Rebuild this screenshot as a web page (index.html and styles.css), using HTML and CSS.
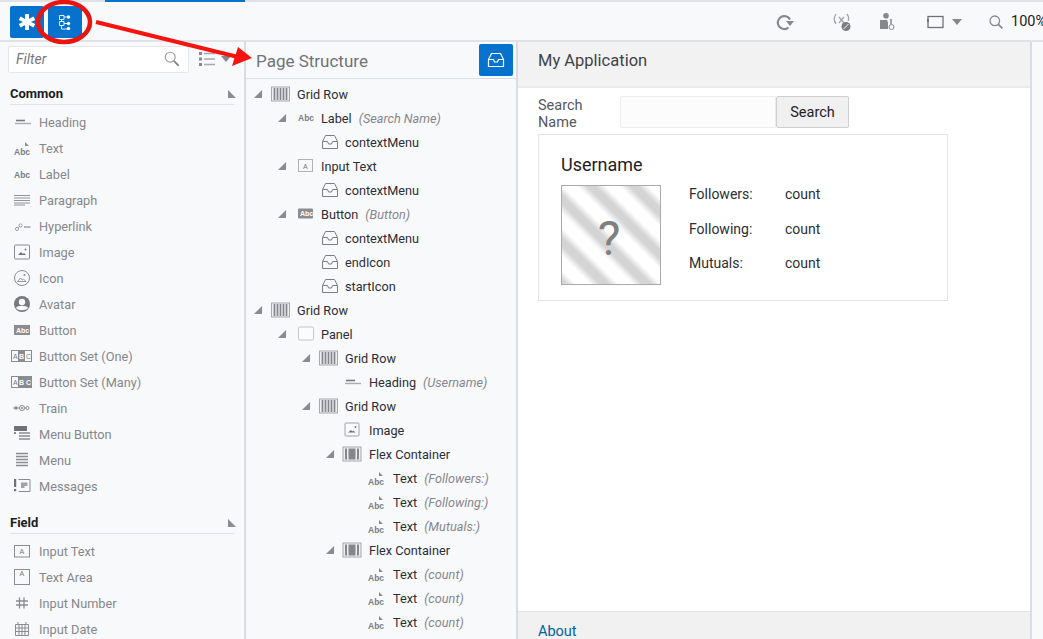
FILE: index.html
```html
<!DOCTYPE html>
<html lang="en">
<head>
<meta charset="utf-8">
<title>Page Designer</title>
<link rel="stylesheet" href="styles.css">
</head>
<body>
<svg class="defs" aria-hidden="true">
  <symbol id="i-heading" viewBox="0 0 22 16"><path d="M5 6.500h9" stroke="#77797e" stroke-width="1.600"/><path d="M4 9.500h16" stroke="#aaacb0" stroke-width="1.400"/></symbol>
  <symbol id="i-para" viewBox="0 0 22 16"><path d="M3 3.500h16M3 6h16M3 8.500h16M3 11h16M3 13h11" stroke="#77797e" stroke-width=".8"/></symbol>
  <symbol id="i-link" viewBox="0 0 22 16"><circle cx="6" cy="11" r="1.600" fill="none" stroke="#a0a2a6"/><circle cx="9.500" cy="7.500" r="1.600" fill="none" stroke="#a0a2a6"/><path d="M7 10l2-2" stroke="#a0a2a6"/><path d="M13 9h6.500" stroke="#8a8c91" stroke-width="1.200"/></symbol>
  <symbol id="i-image" viewBox="0 0 22 16"><rect x="3.500" y="1" width="15" height="14" rx="1" fill="none" stroke="#8a8c91"/><path d="M7 11l3-3 2 2 1-1 2 2z" fill="#6f7176"/><circle cx="14.500" cy="5.500" r=".9" fill="#6f7176"/></symbol>
  <symbol id="i-icon" viewBox="0 0 22 16"><circle cx="11" cy="8" r="7.500" fill="none" stroke="#8a8c91"/><path d="M6.500 11.500l3-3.500 1.800 2 1.200-1 2.500 2.500z" fill="none" stroke="#8a8c91" stroke-width=".9"/><circle cx="13.500" cy="5" r="1" fill="#8a8c91"/></symbol>
  <symbol id="i-avatar" viewBox="0 0 22 16"><circle cx="11" cy="8" r="8" fill="#77797e"/><circle cx="11" cy="6" r="3.200" fill="#f8f9fb"/><path d="M5 12c1-3 11-3 12 0-2 3-10 3-12 0z" fill="#f8f9fb"/></symbol>
  <symbol id="i-train" viewBox="0 0 22 16"><circle cx="5" cy="8" r="1.800" fill="#8a8c91"/><circle cx="11" cy="8" r="2.500" fill="none" stroke="#8a8c91"/><circle cx="11" cy="8" r="1" fill="#8a8c91"/><circle cx="16.500" cy="8" r="1.500" fill="none" stroke="#8a8c91"/><path d="M2 8h1M7 8h1.500M13.500 8h1.500" stroke="#8a8c91"/></symbol>
  <symbol id="i-menubtn" viewBox="0 0 22 16"><rect x="3" y="0" width="13" height="5" fill="#6f7176"/><path d="M3 6h2v2H3z" fill="#8a8c91"/><path d="M8 7h11M8 10h11M8 13h11" stroke="#8a8c91" stroke-width="1.500"/></symbol>
  <symbol id="i-menu" viewBox="0 0 22 16"><path d="M5 1.500h12M5 4.500h12M5 7.500h12M5 10.500h12M5 13.500h12" stroke="#8a8c91" stroke-width="1.500"/></symbol>
  <symbol id="i-msg" viewBox="0 0 22 16"><rect x="3" y="1" width="2.200" height="8" fill="#6f7176"/><rect x="3" y="11" width="2.200" height="2.200" fill="#6f7176"/><path d="M7.500 1.500h11.500v12H7.500" fill="none" stroke="#8a8c91"/><path d="M10 4.500h6.500v3.500h-3v2H10z" fill="#a0a2a6"/></symbol>
  <symbol id="i-num" viewBox="0 0 22 16"><path d="M8.500 2.500v11M13 2.500v11M5 6h12M5 10h12" stroke="#8a8c91" stroke-width="1.300"/></symbol>
  <symbol id="i-date" viewBox="0 0 22 16"><path d="M4.500 3.500h13v11h-13zM4.500 7h13M4.500 10.500h13M8 3.500v11M11 3.500v11M14 3.500v11M7 1v3M15 1v3" fill="none" stroke="#8a8c91"/></symbol>
  <symbol id="i-grid" viewBox="0 0 22 16"><rect x="2.500" y="1" width="18" height="14" fill="#eceef1" stroke="#a6a8ac"/><path d="M5.500 2v12M8.500 2v12M11.500 2v12M14.500 2v12M17.500 2v12" stroke="#85878c" stroke-width="1.700"/></symbol>
  <symbol id="i-flex" viewBox="0 0 22 16"><rect x="2" y="1" width="18" height="14" fill="#eceef1" stroke="#a6a8ac"/><rect x="4" y="2.500" width="2" height="11" fill="#85878c"/><rect x="7.500" y="2.500" width="7" height="11" fill="#85878c"/><rect x="16" y="2.500" width="2" height="11" fill="#85878c"/></symbol>
  <symbol id="i-panel" viewBox="0 0 22 16"><rect x="5.500" y="1" width="15" height="13" rx="1.500" fill="#fcfcfd" stroke="#c4c6ca"/></symbol>
  <symbol id="i-inbox" viewBox="0 0 22 16"><path d="M5.500 7.500L8.500 1.500h9l3 6v7h-15zM5.500 7.500h5l1 2.500h3l1-2.500h5" fill="none" stroke="#7b7d82" stroke-width="1"/></symbol>
  <symbol id="i-image2" viewBox="0 0 22 16"><rect x="4" y="1" width="14" height="13" rx="1" fill="none" stroke="#a0a2a6"/><path d="M7 10.500l3-2.500 1.500 1.500 1-1 2 2z" fill="#6f7176"/><circle cx="14.500" cy="5" r=".9" fill="#6f7176"/></symbol>
</svg>

<div class="app">
  <div class="topline"><span class="topline-blue"></span></div>
  <header class="toolbar">
    <button class="tb-btn" type="button" aria-label="Components">
      <svg class="tb-ic" viewBox="0 0 20 20"><path d="M8 2h4v5l4.300-2.500 2 3.400L14 10l4.300 2.100-2 3.400L12 13v5H8v-5l-4.300 2.500-2-3.400L6 10 1.700 7.900l2-3.400L8 7z" fill="#fff"/></svg>
    </button>
    <button class="tb-btn" type="button" aria-label="Page structure">
      <svg class="tb-ic" viewBox="0 0 20 20"><path d="M4.500 3.500h4.500v4H4.500zM4.500 9.500h4.500v4H4.500zM9 5h3M9 11.500h3M6.500 7.500v2M6.500 13.500v3.500h5.500" fill="none" stroke="#fff" stroke-width=".9"/><circle cx="13.500" cy="5" r="1.700" fill="#fff"/><circle cx="13.500" cy="11.500" r="1.700" fill="#fff"/><circle cx="13.500" cy="16.500" r="1.700" fill="#fff"/></svg>
    </button>
    <div class="tb-right">
      <svg class="tb-tool reload" viewBox="0 0 20 20"><path d="M13.500 15.500A6.500 6.500 0 1 1 15 7.500" fill="none" stroke="#85878c" stroke-width="2.200"/><path d="M11 9h8l-4 5z" fill="#85878c"/></svg>
      <span class="tb-div"></span>
      <svg class="tb-tool vars" viewBox="0 0 20 20"><path d="M4 2q-3.500 5 0 10M15 2q2.500 3.500 1.200 7M7 5l5 6M12 5l-5 6" fill="none" stroke="#a0a2a6" stroke-width="1.300"/><circle cx="14" cy="14.500" r="4.500" fill="#7b7d82"/><path d="M11.500 17l5-5" stroke="#f8f9fb"/></svg>
      <svg class="tb-tool person" viewBox="0 0 20 20"><circle cx="9" cy="3.800" r="2.800" fill="#85878c"/><path d="M3 8h7l1 2.500V17H3z" fill="#85878c"/><circle cx="14.500" cy="15" r="2.500" fill="none" stroke="#85878c"/><path d="M14 7v5" stroke="#85878c" stroke-width="1.500"/></svg>
      <svg class="tb-tool frame" viewBox="0 0 20 16"><rect x="2" y="2.500" width="15" height="11" fill="none" stroke="#6f7176" stroke-width="1.300"/><path d="M2 5v3" stroke="#6f7176" stroke-width="2"/></svg>
      <span class="tb-caret"></span>
      <svg class="tb-tool zoom" viewBox="0 0 20 20"><circle cx="8.500" cy="8.500" r="6" fill="none" stroke="#85878c" stroke-width="1.600"/><path d="M13 13l5 5" stroke="#85878c" stroke-width="2.200"/></svg>
      <span class="tb-zoom">100%</span>
    </div>
  </header>

  <div class="columns">
    <aside class="palette">
      <div class="filter-row">
        <div class="filter">
          <span class="filter-text">Filter</span>
          <svg class="filter-ic" viewBox="0 0 20 20"><circle cx="8" cy="8" r="5.500" fill="none" stroke="#9a9ca0" stroke-width="1.300"/><path d="M12 12l5.500 5.500" stroke="#85878c" stroke-width="2"/></svg>
        </div>
        <svg class="list-ic" viewBox="0 0 18 16"><path d="M1 1h3v3H1zM1 6.500h3v3H1zM1 12h3v3H1z" fill="#85878c"/><path d="M6 2.500h11M6 8h11M6 13.500h11" stroke="#a6a8ac" stroke-width="1.400"/></svg>
        <span class="caret-down"></span>
      </div>
      <div class="sec-head"><span>Common</span><span class="corner"></span></div>
      <ul class="pal-list">
        <li class="pal-item"><svg class="ic"><use href="#i-heading"/></svg>Heading</li>
        <li class="pal-item"><svg class="ic" viewBox="0 0 22 16"><path d="M14 2l4 4h-4z" fill="#8a8c91"/><text x="3" y="15" class="abc">Abc</text></svg>Text</li>
        <li class="pal-item"><svg class="ic" viewBox="0 0 22 16"><text x="3" y="11.500" class="abc">Abc</text></svg>Label</li>
        <li class="pal-item"><svg class="ic"><use href="#i-para"/></svg>Paragraph</li>
        <li class="pal-item"><svg class="ic"><use href="#i-link"/></svg>Hyperlink</li>
        <li class="pal-item"><svg class="ic"><use href="#i-image"/></svg>Image</li>
        <li class="pal-item"><svg class="ic"><use href="#i-icon"/></svg>Icon</li>
        <li class="pal-item"><svg class="ic"><use href="#i-avatar"/></svg>Avatar</li>
        <li class="pal-item"><svg class="ic" viewBox="0 0 22 16"><rect x="3" y="3" width="16" height="10" fill="#8a8c91"/><text x="5" y="10.500" class="abc-w">Abc</text></svg>Button</li>
        <li class="pal-item"><svg class="ic" viewBox="0 0 22 16"><rect x=".5" y="2.500" width="20" height="11" fill="#f8f9fb" stroke="#8a8c91"/><rect x="7" y="3" width="7" height="10" fill="#8a8c91"/><text x="2" y="11" class="abc-s">A</text><text x="8" y="11" class="abc-w">B</text><text x="15" y="11" class="abc-s">C</text></svg>Button Set (One)</li>
        <li class="pal-item"><svg class="ic" viewBox="0 0 22 16"><rect x=".5" y="2.500" width="20" height="11" fill="#8a8c91" stroke="#8a8c91"/><rect x="1" y="3" width="6" height="10" fill="#f8f9fb"/><text x="2" y="11" class="abc-s">A</text><text x="8" y="11" class="abc-w">B</text><text x="15" y="11" class="abc-w">C</text></svg>Button Set (Many)</li>
        <li class="pal-item"><svg class="ic"><use href="#i-train"/></svg>Train</li>
        <li class="pal-item"><svg class="ic"><use href="#i-menubtn"/></svg>Menu Button</li>
        <li class="pal-item"><svg class="ic"><use href="#i-menu"/></svg>Menu</li>
        <li class="pal-item"><svg class="ic"><use href="#i-msg"/></svg>Messages</li>
      </ul>
      <div class="sec-head sec-field"><span>Field</span><span class="corner"></span></div>
      <ul class="pal-list">
        <li class="pal-item"><svg class="ic" viewBox="0 0 22 16"><rect x="3.500" y="2.500" width="15" height="11.500" fill="none" stroke="#8a8c91"/><text x="8.500" y="11" class="abc-s">A</text></svg>Input Text</li>
        <li class="pal-item"><svg class="ic" viewBox="0 0 22 16"><rect x="3.500" y=".5" width="15" height="15" fill="none" stroke="#8a8c91"/><text x="8.500" y="7" class="abc-s">A</text></svg>Text Area</li>
        <li class="pal-item"><svg class="ic"><use href="#i-num"/></svg>Input Number</li>
        <li class="pal-item"><svg class="ic"><use href="#i-date"/></svg>Input Date</li>
      </ul>
    </aside>

    <section class="structure">
      <div class="struct-head">
        <h2 class="struct-title">Page Structure</h2>
        <button class="inbox-btn" type="button" aria-label="Slots">
          <svg class="inbox-ic" viewBox="0 0 20 16"><path d="M2.500 7.500L5.500 1.500h9l3 6v7h-15zM2.500 7.500h5l1 2.500h3l1-2.500h5" fill="none" stroke="#fff" stroke-width="1.200"/></svg>
        </button>
      </div>
      <ul class="tree">
        <li class="row l0"><i class="tri"></i><svg class="ic"><use href="#i-grid"/></svg>Grid Row</li>
        <li class="row l1"><i class="tri"></i><svg class="ic" viewBox="0 0 22 16"><text x="5" y="11" class="abc">Abc</text></svg>Label<em>(Search Name)</em></li>
        <li class="row l2"><i class="tri none"></i><svg class="ic"><use href="#i-inbox"/></svg>contextMenu</li>
        <li class="row l1"><i class="tri"></i><svg class="ic" viewBox="0 0 22 16"><rect x="5.500" y="1.500" width="14" height="12" fill="#f8f9fb" stroke="#b0b2b6"/><text x="10" y="10.500" class="abc-s">A</text></svg>Input Text</li>
        <li class="row l2"><i class="tri none"></i><svg class="ic"><use href="#i-inbox"/></svg>contextMenu</li>
        <li class="row l1"><i class="tri"></i><svg class="ic" viewBox="0 0 22 16"><rect x="5" y="2.500" width="15" height="10" rx="1" fill="#8a8c91"/><text x="7" y="10" class="abc-w">Abc</text></svg>Button<em>(Button)</em></li>
        <li class="row l2"><i class="tri none"></i><svg class="ic"><use href="#i-inbox"/></svg>contextMenu</li>
        <li class="row l2"><i class="tri none"></i><svg class="ic"><use href="#i-inbox"/></svg>endIcon</li>
        <li class="row l2"><i class="tri none"></i><svg class="ic"><use href="#i-inbox"/></svg>startIcon</li>
        <li class="row l0"><i class="tri"></i><svg class="ic"><use href="#i-grid"/></svg>Grid Row</li>
        <li class="row l1"><i class="tri"></i><svg class="ic"><use href="#i-panel"/></svg>Panel</li>
        <li class="row l2"><i class="tri"></i><svg class="ic"><use href="#i-grid"/></svg>Grid Row</li>
        <li class="row l3"><i class="tri none"></i><svg class="ic"><use href="#i-heading"/></svg>Heading<em>(Username)</em></li>
        <li class="row l2"><i class="tri"></i><svg class="ic"><use href="#i-grid"/></svg>Grid Row</li>
        <li class="row l3"><i class="tri none"></i><svg class="ic"><use href="#i-image2"/></svg>Image</li>
        <li class="row l3"><i class="tri"></i><svg class="ic"><use href="#i-flex"/></svg>Flex Container</li>
        <li class="row l4"><i class="tri none"></i><svg class="ic" viewBox="0 0 22 16"><path d="M14 2l4 4h-4z" fill="#8a8c91"/><text x="3" y="15" class="abc">Abc</text></svg>Text<em>(Followers:)</em></li>
        <li class="row l4"><i class="tri none"></i><svg class="ic" viewBox="0 0 22 16"><path d="M14 2l4 4h-4z" fill="#8a8c91"/><text x="3" y="15" class="abc">Abc</text></svg>Text<em>(Following:)</em></li>
        <li class="row l4"><i class="tri none"></i><svg class="ic" viewBox="0 0 22 16"><path d="M14 2l4 4h-4z" fill="#8a8c91"/><text x="3" y="15" class="abc">Abc</text></svg>Text<em>(Mutuals:)</em></li>
        <li class="row l3"><i class="tri"></i><svg class="ic"><use href="#i-flex"/></svg>Flex Container</li>
        <li class="row l4"><i class="tri none"></i><svg class="ic" viewBox="0 0 22 16"><path d="M14 2l4 4h-4z" fill="#8a8c91"/><text x="3" y="15" class="abc">Abc</text></svg>Text<em>(count)</em></li>
        <li class="row l4"><i class="tri none"></i><svg class="ic" viewBox="0 0 22 16"><path d="M14 2l4 4h-4z" fill="#8a8c91"/><text x="3" y="15" class="abc">Abc</text></svg>Text<em>(count)</em></li>
        <li class="row l4"><i class="tri none"></i><svg class="ic" viewBox="0 0 22 16"><path d="M14 2l4 4h-4z" fill="#8a8c91"/><text x="3" y="15" class="abc">Abc</text></svg>Text<em>(count)</em></li>
      </ul>
    </section>

    <main class="preview">
      <div class="app-head">My Application</div>
      <div class="app-body">
        <div class="search-row">
          <label class="search-label">Search<br>Name</label>
          <div class="search-input"></div>
          <button class="search-btn" type="button">Search</button>
        </div>
        <div class="card">
          <div class="card-title">Username</div>
          <div class="card-row">
            <div class="placeholder">?</div>
            <div class="stats">
              <div class="stat"><span class="stat-k">Followers:</span><span>count</span></div>
              <div class="stat"><span class="stat-k">Following:</span><span>count</span></div>
              <div class="stat"><span class="stat-k">Mutuals:</span><span>count</span></div>
            </div>
          </div>
        </div>
      </div>
      <div class="app-foot"><a class="about" href="#">About</a></div>
    </main>
    <div class="rail"></div>
  </div>

  <svg class="annot" viewBox="0 0 1043 639" aria-hidden="true">
    <ellipse cx="64" cy="22" rx="26" ry="20" fill="none" stroke="#e8140f" stroke-width="4.500"/>
    <path d="M96 22L238 57" stroke="#f5140f" stroke-width="4"/>
    <path d="M232 66L252 58 238 47z" fill="#f5140f"/>
  </svg>
</div>
</body>
</html>
```
FILE: styles.css
```css
* { box-sizing: border-box; }
html, body { margin: 0; padding: 0; }
body { font-family: Roboto, "Liberation Sans", sans-serif; color: #2c2e33; background: #fff; overflow: hidden; }
ul { list-style: none; margin: 0; padding: 0; }
.defs { position: absolute; width: 0; height: 0; }
.abc { font: bold 8.500px "Liberation Sans", sans-serif; fill: #7b7d82; }
.abc-w { font: bold 7px "Liberation Sans", sans-serif; fill: #fff; }
.abc-s { font: 7px "Liberation Sans", sans-serif; fill: #77797e; }

.app { position: relative; width: 1043px; height: 639px; display: flex; flex-direction: column; overflow: hidden; background: #f8f9fb; }
.topline { height: 3px; flex: none; background: #f8f9fb; border-top: 2px solid #dfe3e8; position: relative; }
.topline-blue { position: absolute; left: 105px; top: -2px; width: 140px; height: 2px; background: #0572ce; }

.toolbar { height: 39px; flex: none; display: flex; align-items: center; padding-left: 10px; gap: 4px; background: #f8f9fb; border-bottom: 2px solid #dfe3e8; }
.tb-btn { width: 34px; height: 32px; border: 0; padding: 0; border-radius: 2px; background: #0572ce; display: flex; align-items: center; justify-content: center; }
.tb-ic { width: 20px; height: 20px; }
.tb-right { margin-left: auto; display: flex; align-items: center; width: 268px; height: 100%; flex: none; overflow: hidden; white-space: nowrap; }
.tb-tool { flex: none; }
.reload { width: 20px; height: 20px; }
.tb-div { width: 1px; height: 26px; background: #dfe3e8; margin-left: 23px; }
.vars { width: 20px; height: 20px; margin-left: 14px; }
.person { width: 20px; height: 20px; margin-left: 25px; }
.frame { width: 20px; height: 16px; margin-left: 29px; }
.tb-caret { width: 0; height: 0; border-left: 5px solid transparent; border-right: 5px solid transparent; border-top: 6px solid #85878c; margin-left: 6px; }
.zoom { width: 16px; height: 16px; margin-left: 26px; }
.tb-zoom { font-size: 14.500px; color: #1f2024; margin-left: 7px; }

.columns { flex: 1; min-height: 0; display: flex; }

.palette { width: 246px; flex: none; border-right: 2px solid #d9dde3; overflow: hidden; font-size: 12.750px; color: #85878c; }
.filter-row { height: 34px; display: flex; align-items: center; padding: 0 0 0 8px; }
.filter { width: 181px; height: 27px; display: flex; align-items: center; justify-content: space-between; padding: 0 7px; background: #fff; border: 1px solid #e4e7eb; border-radius: 2px; }
.filter-text { font-size: 14px; font-style: italic; color: #77797e; }
.filter-ic { width: 18px; height: 18px; }
.list-ic { width: 18px; height: 16px; margin-left: 9px; flex: none; }
.caret-down { width: 0; height: 0; border-left: 5px solid transparent; border-right: 5px solid transparent; border-top: 6px solid #85878c; margin-left: 5px; }

.sec-head { height: 29px; margin: 0 10px 4px; display: flex; align-items: flex-end; justify-content: space-between; padding-bottom: 3px; border-bottom: 1px solid #dfe2e6; font-size: 13px; font-weight: 700; color: #1c1d20; }
.sec-field { height: 35px; }
.corner { width: 0; height: 0; border-right: 8px solid transparent; border-bottom: 8px solid #8a8c91; margin: 0 -2px 3px 0; }
.pal-item { height: 26px; display: flex; align-items: center; padding-left: 11px; white-space: nowrap; }
.ic { width: 22px; height: 16px; flex: none; }
.pal-item .ic { margin-right: 6px; }

.structure { width: 272px; flex: none; border-right: 2px solid #d9dde3; overflow: hidden; font-size: 12.700px; color: #2c2e33; }
.struct-head { height: 37px; display: flex; align-items: center; justify-content: space-between; padding: 0 3px 0 10px; border-bottom: 1px solid #d9e0e8; }
.struct-title { margin: 2px 0 0; font-size: 17px; font-weight: 400; color: #707379; }
.inbox-btn { width: 34px; height: 32px; border: 0; padding: 0; border-radius: 2px; background: #0572ce; display: flex; align-items: center; justify-content: center; }
.inbox-ic { width: 20px; height: 16px; }
.tree { padding-top: 3px; }
.row { height: 24px; display: flex; align-items: center; white-space: nowrap; }
.row .ic { margin-right: 6px; }
.row em { margin-left: 7px; color: #85878c; font-style: italic; }
.tri { width: 15px; height: 10px; flex: none; position: relative; }
.tri::before { content: ""; position: absolute; left: 0; top: 1px; width: 0; height: 0; border-left: 8px solid transparent; border-bottom: 8px solid #8a8c91; }
.tri.none::before { display: none; }
.l0 { padding-left: 8px; }
.l1 { padding-left: 32px; }
.l2 { padding-left: 56px; }
.l3 { padding-left: 80px; }
.l4 { padding-left: 104px; }

.preview { width: 514px; flex: none; display: flex; flex-direction: column; background: #fff; border-right: 2px solid #d9dde3; }
.app-head { height: 46px; flex: none; display: flex; align-items: center; padding: 0 0 7px 20px; background: #f2f2f2; border-bottom: 2px solid #ebebeb; font-size: 16.500px; color: #3f4248; }
.app-body { flex: 1; padding: 8px 0 0 20px; }
.search-row { display: flex; align-items: stretch; height: 32px; }
.search-label { width: 82px; font-size: 14.500px; line-height: 17px; color: #55585e; margin-top: 1px; }
.search-input { width: 156px; background: #fcfcfc; border: 1px solid #ececec; border-radius: 2px 0 0 2px; }
.search-btn { width: 73px; padding: 0; background: #f0f0f0; border: 1px solid #cfcfcf; border-radius: 2px; font: 14.500px Roboto, "Liberation Sans", sans-serif; color: #1f2024; }
.card { width: 410px; height: 167px; margin-top: 6px; padding: 19px 22px; border: 1px solid #e2e2e2; font-size: 14px; color: #2c2e33; }
.card-title { font-size: 18px; line-height: 22px; color: #1f2024; }
.card-row { display: flex; margin-top: 9px; }
.placeholder { width: 100px; height: 100px; flex: none; display: flex; align-items: center; justify-content: center; padding: 6px 4px 0 0; border: 1px solid #aaa; font-size: 48px; color: #808080; background: repeating-linear-gradient(45deg, #d4d4d4 0, #d4d4d4 3px, #fff 10px, #fff 20px, #d4d4d4 27px, #d4d4d4 30px); }
.stats { margin-left: 28px; }
.stat { display: flex; height: 18px; margin-bottom: 16.500px; align-items: center; }
.stat-k { width: 96px; }

.app-foot { height: 28px; flex: none; padding: 11px 0 0 20px; background: #f1f1f1; border-top: 1px solid #e4e4e4; font-size: 14.500px; }
.about { color: #04619f; text-decoration: none; }
.rail { flex: 1; background: #f8f9fb; }

.annot { position: absolute; left: 0; top: 0; width: 1043px; height: 639px; pointer-events: none; }
```
